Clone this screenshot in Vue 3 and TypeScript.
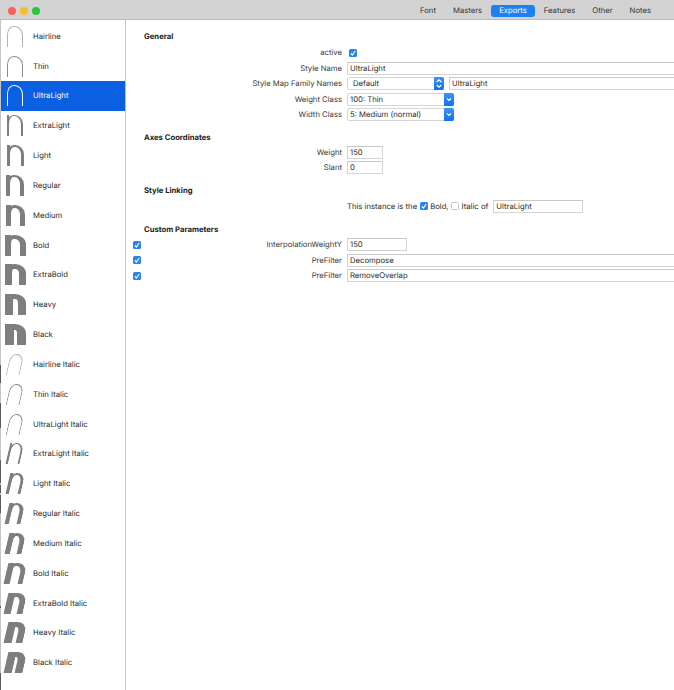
<script setup lang="ts">
interface Style { name: string; w: number; bw: number; color?: string }
const uprightData: Style[] = [
  { name: 'Hairline', w: 16, bw: 0.6, color: '#b4b4b4' },
  { name: 'Thin', w: 16, bw: 1, color: '#8c8c8c' },
  { name: 'UltraLight', w: 16, bw: 1.4, color: '#fff' },
  { name: 'ExtraLight', w: 16, bw: 2 },
  { name: 'Light', w: 17, bw: 3 },
  { name: 'Regular', w: 18, bw: 4 },
  { name: 'Medium', w: 19, bw: 5 },
  { name: 'Bold', w: 21, bw: 6.5 },
  { name: 'ExtraBold', w: 21, bw: 7.5 },
  { name: 'Heavy', w: 21, bw: 8.5 },
  { name: 'Black', w: 21, bw: 9 },
]
const italicData = uprightData.map((s) => ({
  name: s.name + ' Italic',
  w: s.w - 2,
  bw: s.bw >= 6 ? s.bw * 0.9 : s.bw,
  color: s.name === 'UltraLight' ? '#8c8c8c' : s.color,
}))
const styles = [
  ...uprightData.map((s) => ({ ...s, italic: false })),
  ...italicData.map((s) => ({ ...s, italic: true })),
]
const tabs = ['Font', 'Masters', 'Exports', 'Features', 'Other', 'Notes']
const edgeMarks = [
  { top: 365, height: 18 },
  { top: 403, height: 25 },
  { top: 460, height: 23 },
  { top: 485, height: 8 },
  { top: 495, height: 18 },
  { top: 606, height: 2 },
  { top: 673, height: 17 },
]
function glyph(s: Style) {
  const top = s.bw < 2 ? s.bw : s.bw * 0.68
  return {
    width: s.w + 'px',
    borderWidth: `${top}px ${s.bw}px 0 ${s.bw}px`,
    borderColor: s.color ?? '#7e7e7e',
  }
}
function stem(s: Style) {
  return {
    width: s.bw + 'px',
    background: s.color ?? '#7e7e7e',
  }
}
</script>

<template>
  <div class="window">
    <header class="titlebar">
      <div class="lights">
        <span class="light red"></span>
        <span class="light yellow"></span>
        <span class="light green"></span>
      </div>
      <nav class="tabs">
        <span v-for="t in tabs" :key="t" class="tab" :class="{ on: t === 'Exports' }">{{ t }}</span>
      </nav>
    </header>
    <div class="body">
      <aside class="sidebar">
        <div
          v-for="s in styles"
          :key="s.name"
          class="item"
          :class="{ selected: s.name === 'UltraLight' }"
        >
          <div class="thumb">
            <div class="glyphbox" :class="{ italic: s.italic }" :style="{ width: s.w + 'px' }">
              <div class="arch" :style="glyph(s)"></div>
              <div v-if="s.bw >= 2" class="stem" :style="stem(s)"></div>
            </div>
          </div>
          <span>{{ s.name }}</span>
        </div>
        <span
          v-for="m in edgeMarks"
          :key="m.top"
          class="edge"
          :style="{ top: m.top + 'px', height: m.height + 'px' }"
        ></span>
      </aside>
      <main class="panel">
        <h3 class="head first">General</h3>
        <div class="row">
          <label class="lab">active</label>
          <div class="ctl"><span class="check inset"><svg viewBox="0 0 9 9"><path d="M2 4.8 L3.8 6.8 L7 2.2" /></svg></span></div>
        </div>
        <div class="row">
          <label class="lab">Style Name</label>
          <div class="ctl"><div class="field wide">UltraLight</div></div>
        </div>
        <div class="row">
          <label class="lab">Style Map Family Names</label>
          <div class="ctl gap">
            <div class="popup map">
              <span class="ptext">Default</span>
              <span class="btn small"><svg viewBox="0 0 8 11"><path d="M2 4.2 L4 2.4 L6 4.2 M2 6.8 L4 8.6 L6 6.8" /></svg></span>
            </div>
            <div class="field wide">UltraLight</div>
          </div>
        </div>
        <div class="row">
          <label class="lab">Weight Class</label>
          <div class="ctl">
            <div class="popup cls">
              <span class="ptext flat">100: Thin</span>
              <span class="btn"><svg viewBox="0 0 10 12"><path d="M3 5 L5 7 L7 5" /></svg></span>
            </div>
          </div>
        </div>
        <div class="row">
          <label class="lab">Width Class</label>
          <div class="ctl">
            <div class="popup cls">
              <span class="ptext flat">5: Medium (normal)</span>
              <span class="btn"><svg viewBox="0 0 10 12"><path d="M3 5 L5 7 L7 5" /></svg></span>
            </div>
          </div>
        </div>

        <h3 class="head axes">Axes Coordinates</h3>
        <div class="row">
          <label class="lab">Weight</label>
          <div class="ctl"><div class="field num">150</div></div>
        </div>
        <div class="row">
          <label class="lab">Slant</label>
          <div class="ctl"><div class="field num">0</div></div>
        </div>

        <h3 class="head link">Style Linking</h3>
        <div class="row">
          <label class="lab"></label>
          <div class="ctl linkline">
            <span>This instance is the</span>
            <span class="check"><svg viewBox="0 0 9 9"><path d="M2 4.8 L3.8 6.8 L7 2.2" /></svg></span>
            <span class="tight">Bold,</span>
            <span class="check off tight"></span>
            <span>Italic of</span>
            <div class="field linkfield">UltraLight</div>
          </div>
        </div>

        <h3 class="head custom">Custom Parameters</h3>
        <div class="row">
          <div class="lab withcheck">
            <span class="check"><svg viewBox="0 0 9 9"><path d="M2 4.8 L3.8 6.8 L7 2.2" /></svg></span>
            <label>InterpolationWeightY</label>
          </div>
          <div class="ctl"><div class="field mid">150</div></div>
        </div>
        <div class="row">
          <div class="lab withcheck">
            <span class="check"><svg viewBox="0 0 9 9"><path d="M2 4.8 L3.8 6.8 L7 2.2" /></svg></span>
            <label>PreFilter</label>
          </div>
          <div class="ctl"><div class="field wide">Decompose</div></div>
        </div>
        <div class="row">
          <div class="lab withcheck">
            <span class="check"><svg viewBox="0 0 9 9"><path d="M2 4.8 L3.8 6.8 L7 2.2" /></svg></span>
            <label>PreFilter</label>
          </div>
          <div class="ctl"><div class="field wide">RemoveOverlap</div></div>
        </div>
      </main>
    </div>
  </div>
</template>

<style scoped>
.window {
  position: relative;
  width: 674px;
  height: 690px;
  display: flex;
  flex-direction: column;
  overflow: hidden;
  background: #fff;
  font-family: Inter, "Liberation Sans", sans-serif;
  font-size: 7.7px;
  text-rendering: geometricPrecision;
  color: #2a2a2a;
}
.titlebar {
  height: 20px;
  flex: none;
  box-sizing: border-box;
  border-bottom: 1px solid #bcbcbc;
  background: #d3d3d3;
  display: flex;
  align-items: center;
  justify-content: space-between;
  padding: 2px 15px 0 8px;
}
.lights { display: flex; gap: 4px; }
.light { width: 8px; height: 8px; border-radius: 50%; box-sizing: border-box; }
.red { background: #f9625a; }
.yellow { background: #fbbd2e; }
.green { background: #2ac63f; }
.tabs { display: flex; align-items: center; gap: 1px; }
.tab { padding: 0 8px; height: 12px; line-height: 12px; border-radius: 3px; color: #333; }
.tab.on { background: #1d80f5; color: #fff; }
.body { flex: 1; display: flex; min-height: 0; }
.sidebar {
  width: 126px;
  flex: none;
  box-sizing: border-box;
  border-left: 1px solid #c4c4c4;
  border-right: 1px solid #c4c4c4;
  padding-top: 1.4px;
}
.edge {
  position: absolute;
  left: 0;
  width: 1px;
  background: #5a5a5a;
}
.item {
  height: 29.84px;
  display: flex;
  align-items: center;
}
.item.selected { background: #0a60e0; color: #fff; }
.thumb {
  width: 32px;
  flex: none;
  display: flex;
  justify-content: center;
  padding-right: 4px;
  box-sizing: border-box;
}
.glyphbox { position: relative; height: 21px; }
.glyphbox.italic { transform: skewX(-13deg); }
.arch {
  height: 21px;
  box-sizing: border-box;
  border-style: solid;
  border-radius: 42% 52% 0 0 / 42% 46% 0 0;
}
.stem {
  position: absolute;
  left: 0;
  top: 0;
  bottom: 0;
}
.panel {
  flex: 1;
  min-width: 0;
  overflow: hidden;
  display: flex;
  flex-direction: column;
}
.head { margin: 0 0 0 18px; font-size: 7.7px; font-weight: 700; line-height: 12px; color: #222; }
.first { margin-top: 11px; margin-bottom: 2px; }
.axes { margin-top: 9px; margin-bottom: 1px; }
.link { margin-top: 9px; margin-bottom: 2px; }
.custom { margin-top: 10px; margin-bottom: 1px; }
.row {
  height: 15.5px;
  display: grid;
  grid-template-columns: 216px 1fr;
  column-gap: 5px;
  align-items: center;
}
.lab { text-align: right; white-space: nowrap; color: #3a3a3a; }
.withcheck { display: flex; justify-content: space-between; align-items: center; padding-left: 7px; }
.ctl { display: flex; align-items: center; min-width: 0; }
.gap { gap: 5px; }
.field {
  height: 13px;
  box-sizing: border-box;
  border: 1px solid #d4d4d4;
  border-top-color: #c8c8c8;
  line-height: 11px;
  padding-left: 2px;
  background: #fff;
  white-space: nowrap;
  flex: none;
}
.wide { width: 340px; }
.num { width: 36px; }
.mid { width: 60px; }
.linkfield { width: 90px; margin-left: 2px; }
.popup {
  height: 13px;
  flex: none;
  box-sizing: border-box;
  display: flex;
  align-items: center;
  justify-content: space-between;
  border: 1px solid #d6d6d6;
  border-radius: 2px;
  background: #fff;
}
.map { width: 97px; }
.cls { width: 107px; }
.ptext { padding-left: 5px; line-height: 11px; white-space: nowrap; }
.ptext.flat { padding-left: 2px; }
.btn {
  width: 10px;
  height: 13px;
  margin: -1px -1px -1px 0;
  border-radius: 0 2px 2px 0;
  background: linear-gradient(#3c93f8, #1370ee);
  display: flex;
}
.btn svg { width: 100%; height: 100%; fill: none; stroke: #fff; stroke-width: 1.1; }
.check {
  width: 8px;
  height: 8px;
  flex: none;
  border-radius: 1.5px;
  background: #2a82f3;
  display: inline-flex;
  box-sizing: border-box;
}
.check.inset { margin-left: 2px; }
.check svg { width: 100%; height: 100%; fill: none; stroke: #fff; stroke-width: 1.3; }
.check.off { background: #fff; border: 1px solid #c6c6c6; }
.linkline { gap: 3px; white-space: nowrap; }
.tight { margin-left: -1px; }
</style>

<style>
html, body { margin: 0; background: #fff; }
</style>
